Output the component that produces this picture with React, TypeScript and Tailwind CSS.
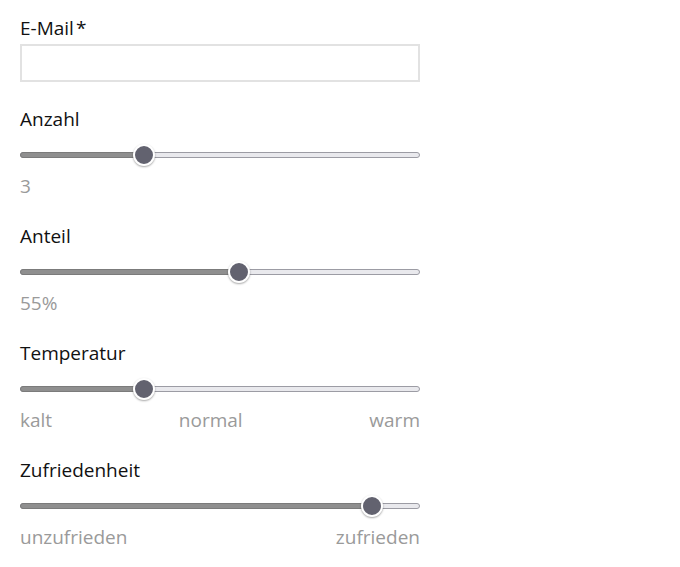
import React from "react";

type SliderProps = {
  label: string;
  value: number; // 0..1
  hints: string[];
};

const Slider: React.FC<SliderProps> = ({ label, value, hints }) => {
  // thumb travels from 10px to width-10px
  const left = `calc(10px + (100% - 20px) * ${value})`;
  return (
    <div className="flex flex-col">
      <label className="text-[19px] leading-[26px] text-[#111]">{label}</label>
      <div className="relative mt-[20px] h-[6px] w-full">
        <div className="absolute inset-0 rounded-full border border-[#9c9ca4] bg-[#e9e9ed]" />
        <div
          className="absolute left-0 top-0 h-[6px] rounded-full border border-[#7b7b7b] bg-[#8f8f8f]"
          style={{ width: left }}
        />
        <div
          className="absolute top-1/2 h-[22px] w-[22px] -translate-x-1/2 -translate-y-1/2 rounded-full border-2 border-white bg-[#62626f] shadow-[0_1px_2px_rgba(0,0,0,0.35)]"
          style={{ left }}
        />
      </div>
      <div className="mt-[15px] flex justify-between text-[19px] leading-[26px] text-[#9a9a9a]">
        {hints.map((h) => (
          <span key={h}>{h}</span>
        ))}
      </div>
    </div>
  );
};

export default function App() {
  return (
    <div
      className="min-h-[567px] w-[680px] bg-white"
      style={{ fontFamily: '"Open Sans", sans-serif' }}
    >
      <div className="ml-[20px] flex w-[400px] flex-col gap-[24px] pt-[15px]">
        <div className="flex flex-col">
          <label className="text-[19px] leading-[26px] text-[#111]">
            E-Mail<span className="ml-[2px]">*</span>
          </label>
          <input
            type="email"
            className="mt-[3px] h-[38px] w-[400px] border-2 border-[#e2e2e2] bg-white px-2 outline-none"
          />
        </div>
        <Slider label="Anzahl" value={0.3} hints={["3"]} />
        <Slider label="Anteil" value={0.55} hints={["55%"]} />
        <Slider label="Temperatur" value={0.3} hints={["kalt", "normal", "warm"]} />
        <Slider label="Zufriedenheit" value={0.9} hints={["unzufrieden", "zufrieden"]} />
      </div>
    </div>
  );
}
